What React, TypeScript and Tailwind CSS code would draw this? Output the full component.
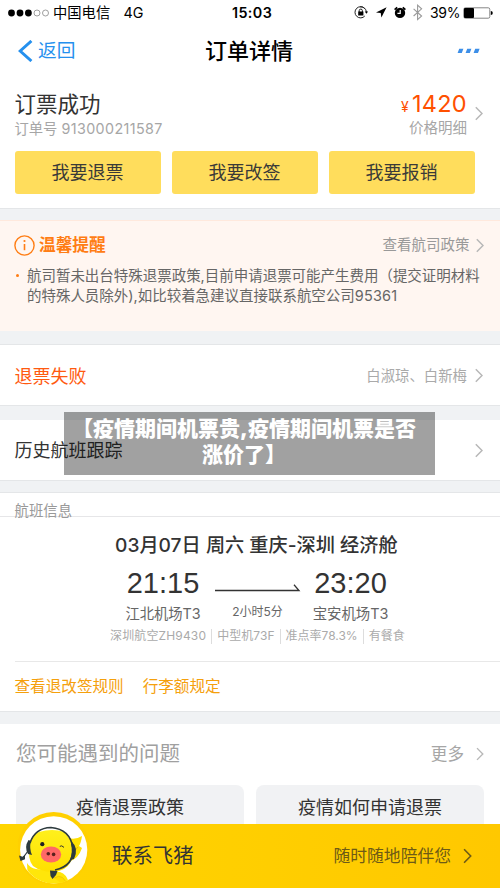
import React from "react";

const FONT = "font-['Inter','Noto_Sans_CJK_SC',sans-serif]";

function Chevron({ className = "text-[#b8b8b8]", w = 8, h = 15 }: { className?: string; w?: number; h?: number }) {
  return (
    <svg width={w} height={h} viewBox="0 0 8 15" className={`shrink-0 ${className}`} fill="none" stroke="currentColor" strokeWidth="1.5">
      <path d="M0.8 1.2 L7 7.5 L0.8 13.8" />
    </svg>
  );
}

function StatusBar() {
  return (
    <div className="flex h-[25px] items-center pl-[8px] pr-[7px] text-[14.3px] leading-[25px] text-black">
      <svg width="42" height="8" viewBox="0 0 42 8" className="shrink-0">
        <circle cx="3.5" cy="4" r="3.4" />
        <circle cx="12" cy="4" r="3.4" />
        <circle cx="20.4" cy="4" r="3.4" />
        <circle cx="29" cy="4" r="3" fill="none" stroke="#777" strokeWidth=".7" />
        <circle cx="37.5" cy="4" r="3" fill="none" stroke="#777" strokeWidth=".7" />
      </svg>
      <span className="ml-[3px] w-[70.5px] shrink-0">中国电信</span>
      <span className="w-[108.5px] shrink-0 text-[14.3px]">4G</span>
      <span className="w-[122px] shrink-0 text-[14.3px] font-semibold tracking-[0.4px]">15:03</span>
      <svg width="72" height="18" viewBox="354 4 72 18" className="shrink-0">
        <g fill="none" stroke="#222" strokeWidth="1">
          <path d="M364.8 8.6 A5.6 5.6 0 1 0 364.8 16" />
          <path d="M360 6.8 A5.6 5.6 0 0 1 366.4 12" />
          <path d="M359.2 12 v-1.3 a1.6 1.6 0 0 1 3.2 0 V12" />
        </g>
        <path d="M358.2 11.6 h5.2 v4 h-5.2z M364.8 11.6 h3.3 l-1.7 2.2z" />
        <path d="M386.6 7.2 L376 12.4 l4.7 .5 l.7 4.6z" />
        <circle cx="400" cy="12.9" r="5.2" />
        <path d="M394.6 9.6 l2.6-2.2 M405.4 9.6 l-2.6-2.2" stroke="#000" strokeWidth="1.7" />
        <path d="M400.2 10 v3.3 h-2.8" fill="none" stroke="#fff" strokeWidth="1.2" />
        <path d="M413.6 8.8 l8 7.2 -4 3.6 V5.2 l4 3.6 -8 7.2" fill="none" stroke="#999" strokeWidth="1.1" />
      </svg>
      <span className="ml-[4px] w-[33px] shrink-0 text-[14px] tracking-[-0.3px]">39%</span>
      <svg width="30" height="12" viewBox="0 0 30 12" className="shrink-0">
        <rect x=".8" y=".8" width="26" height="10.4" rx="1.6" fill="#fff" stroke="#777" strokeWidth=".9" />
        <rect x="1" y="1" width="10" height="10" rx="1" />
        <path d="M27.8 4 a2 2 0 0 1 0 4z" />
      </svg>
    </div>
  );
}

function NavBar() {
  return (
    <div className="flex h-[52px] items-center pl-[18px] pr-[19px]">
      <div className="flex w-[187px] items-center text-[#2590ee]">
        <svg width="15" height="22" viewBox="0 0 15 22" fill="none" stroke="currentColor" strokeWidth="3">
          <path d="M13.4 1 L2.2 11 L13.4 21" />
        </svg>
        <span className="ml-[5px] text-[18.7px] leading-[28px]">返回</span>
      </div>
      <h1 className="text-[22px] font-medium leading-[30px] text-black">订单详情</h1>
      <svg width="24" height="6" viewBox="0 0 24 6" className="ml-auto" fill="#3d8fe8">
        <path d="M2.2 .8h4.2l-1.6 4.2H.6z M10.2 .8h4.2l-1.6 4.2H8.6z M18.2 .8h4.4l-1.6 4.2h-4.4z" />
      </svg>
    </div>
  );
}

function Gap({ className }: { className: string }) {
  return <div className={`shrink-0 bg-[#f0f2f4] border-[#e4e6e8] ${className}`} />;
}

function OrderSummary() {
  return (
    <section className="h-[131px] pl-[14.5px] pr-[15px] pt-[16px]">
      <div className="flex h-[58px]">
        <div>
          <div className="text-[21.5px] leading-[23px] text-[#333]">订票成功</div>
          <div className="mt-[2px] text-[14.3px] leading-[22px] text-[#a6a6a6]">
            订单号 <span className="tracking-[0.4px]">913000211587</span>
          </div>
        </div>
        <div className="ml-auto mr-[8px] flex flex-col items-end">
          <div className="text-[23.5px] leading-[22px] tracking-[0.3px] text-[#ff5000]">
            <span className="mr-[3px] text-[14px]">¥</span>1420
          </div>
          <div className="text-[14.5px] leading-[20px] text-[#a6a6a6]">价格明细</div>
        </div>
        <div className="mr-[2px] pt-[13px]"><Chevron /></div>
      </div>
      <div className="flex gap-[11px]">
        {["我要退票", "我要改签", "我要报销"].map((t) => (
          <button key={t} className="h-[43px] w-[146px] rounded-[3px] bg-[#ffdd5c] text-[18px] leading-[43px] text-[#3a3a38]">{t}</button>
        ))}
      </div>
    </section>
  );
}

function Notice() {
  return (
    <section className="h-[111px] border-t border-[#ffe9dd] bg-[#fff6f1] pl-[14px] pr-[16.5px] pt-[12px]">
      <div className="flex h-[24px] items-center">
        <svg width="21" height="21" viewBox="0 0 21 21" fill="none" stroke="#ff7d14" strokeWidth="1.4">
          <circle cx="10.5" cy="10.5" r="9.6" />
          <path d="M10.5 9v6.2" strokeWidth="1.6" />
          <circle cx="10.5" cy="6" r="1.1" fill="#ff7d14" stroke="none" />
        </svg>
        <span className="ml-[4px] text-[16.7px] font-bold leading-[24px] text-[#ff7d14]">温馨提醒</span>
        <span className="ml-auto mr-[6px] text-[14.5px] text-[#999]">查看航司政策</span>
        <Chevron />
      </div>
      <div className="mt-[9px] flex">
        <span className="ml-[2px] mt-[8px] h-[3px] w-[3px] rounded-full bg-[#ff7d14]" />
        <p className="ml-[8px] whitespace-nowrap text-[14.48px] leading-[19.5px] text-[#666]">
          航司暂未出台特殊退票政策,目前申请退票可能产生费用（提交证明材料<br />
          的特殊人员除外),如比较着急建议直接联系航空公司<span className="tracking-[0.2px]">95361</span>
        </p>
      </div>
    </section>
  );
}

function FlightInfo() {
  return (
    <section className="h-[218px] bg-white">
      <div className="h-[24px] border-b border-[#e6e6e8] pl-[14.5px] pt-[6px] text-[14.4px] leading-[23px] text-[#999]">航班信息</div>
      <div className="pt-[16px]">
        <div className="pl-[115px] text-[19.2px] font-medium leading-[24px] whitespace-nowrap text-[#333]">03月07日 周六 重庆-深圳 经济舱</div>
        <div className="mt-[10px] flex pl-[124px]">
          <div className="w-[78px] text-center">
            <div className="font-['Liberation_Sans'] text-[29px] leading-[32px] text-[#333]">21:15</div>
            <div className="mt-[3px] text-[14.3px] leading-[24px] text-[#666]">江北机场T3</div>
          </div>
          <div className="ml-[12px] w-[87px] text-center">
            <svg width="87" height="32" viewBox="0 0 87 32" fill="none" stroke="#333" strokeWidth="1.3">
              <path d="M1 23.5 H85 L80 17.8" />
            </svg>
            <div className="mt-[2px] text-[12px] leading-[22px] text-[#666]">2小时5分</div>
          </div>
          <div className="ml-[10px] w-[79px] text-center">
            <div className="font-['Liberation_Sans'] text-[29px] leading-[32px] text-[#333]">23:20</div>
            <div className="mt-[3px] text-[14.4px] leading-[24px] text-[#666]">宝安机场T3</div>
          </div>
        </div>
        <div className="ml-[110px] flex h-[20px] items-center whitespace-nowrap text-[12px] leading-[20px] text-[#aaa]">
          <span className="tracking-[0.15px]">深圳航空ZH9430</span><i className="mx-[5px] h-[15px] w-px bg-[#ddd]" />
          <span className="tracking-[0.05px]">中型机73F</span><i className="mx-[5px] h-[15px] w-px bg-[#ddd]" />
          <span>准点率78.3%</span><i className="mx-[5px] h-[15px] w-px bg-[#ddd]" />
          <span>有餐食</span>
        </div>
      </div>
      <div className="ml-[14.5px] mt-[15px] flex gap-[19px] border-t border-[#e8e8e8] pt-[13px] text-[15.6px] leading-[24px] text-[#f5a00c]">
        <span>查看退改签规则</span>
        <span>行李额规定</span>
      </div>
    </section>
  );
}

function Questions() {
  return (
    <section className="h-[100px] overflow-hidden px-[16px] pt-[15px]">
      <div className="flex h-[30px] items-center">
        <span className="text-[20.5px] leading-[30px] text-[#a0a0a0]">您可能遇到的问题</span>
        <span className="ml-auto mr-[12px] text-[16.6px] text-[#a6a6a6]">更多</span>
        <Chevron w={8} h={14} />
      </div>
      <div className="mt-[16px] flex gap-[12px]">
        {["疫情退票政策", "疫情如何申请退票"].map((t) => (
          <div key={t} className="h-[54px] w-[228px] rounded-[8px] bg-[#f1f2f4] text-center text-[18px] leading-[46px] text-[#333]">{t}</div>
        ))}
      </div>
    </section>
  );
}

function Mascot() {
  return (
    <svg width="74" height="76" viewBox="0 0 74 76" className="absolute bottom-0 left-[18px]">
      <defs>
        <linearGradient id="pig" x1="0" y1="0" x2="0" y2="1">
          <stop offset="0" stopColor="#fff01c" />
          <stop offset="1" stopColor="#ffe000" />
        </linearGradient>
        <clipPath id="disc"><circle cx="36" cy="38" r="33.5" /></clipPath>
      </defs>
      <circle cx="35.7" cy="36.5" r="36.5" fill="#ffd000" />
      <circle cx="35.7" cy="37.8" r="33.6" fill="#fff" />
      <g clipPath="url(#disc)">
        <path d="M50 26 Q58 28 64 24 Q63 31 61 34 L64 36 Q60 48 51 49z" fill="#ffe000" />
        <path d="M60 35 Q56 41 52 41" stroke="#edb300" fill="none" />
        <path d="M9 51 Q12 56 18 57 L42 60 Q50 62 52 76 H15 Q9 65 9 51" fill="#ffe60a" />
        <path d="M36 66 Q46 60 50 76" fill="#ffdc00" stroke="#efc300" strokeWidth=".8" />
      </g>
      <g transform="translate(0 2)">
        <path d="M12 30 Q13 21 21 18 Q34 14 47 18 Q54 27 55 42 Q52 54 41 57 Q26 60 15 52 Q9 45 12 30z" fill="url(#pig)" />
        <path d="M12 29 Q17 14 33 13.5 Q52 15 55 34 Q56 52 37 56" fill="none" stroke="#2d3a3d" strokeWidth="1.7" />
        <path d="M10.5 26 Q6 33 10 40 L14 41 Q11 34 13 27z M54 28 Q61 34 56 45 L52 46 Q55 38 53 30z" fill="#2d3a3d" />
      </g>
      <path d="M10 39 Q7 43 5 46" fill="none" stroke="#2d3a3d" strokeWidth="1.2" />
      <path d="M1 43.5 l3.5 1.2 2.5-2 0 4.5 -4.5 1.8z M32 58.5 l7.5 .5 -1.5 4 -3.5 4 -2-3z" fill="#2d3a3d" />
      <ellipse cx="33" cy="42.5" rx="10.2" ry="8" fill="#ff6866" />
      <circle cx="30.3" cy="41.8" r="1.8" fill="#5a201e" />
      <circle cx="35.6" cy="42.4" r="1.8" fill="#5a201e" />
      <circle cx="24.3" cy="32.2" r="2.1" fill="#222" />
      <path d="M41.8 34.4 Q43.5 32.8 46 35.4" fill="none" stroke="#333" strokeWidth="1" />
    </svg>
  );
}

function ContactBar() {
  return (
    <footer className="relative flex h-[64px] items-center bg-gradient-to-r from-[#ffd500] to-[#ffc800] pl-[112px] pr-[28px]">
      <Mascot />
      <span className="text-[20.4px] leading-[30px] text-[#333]">联系飞猪</span>
      <span className="ml-auto mr-[12px] text-[16.8px] leading-[26px] text-[#6d5a16]">随时随地陪伴您</span>
      <Chevron className="text-[#6d5a16]" w={9} h={16} />
    </footer>
  );
}

export default function App() {
  return (
    <main className={`relative flex h-[888px] w-[500px] flex-col overflow-hidden bg-white [&>*]:shrink-0 ${FONT}`}>
      <StatusBar />
      <NavBar />
      <OrderSummary />
      <Gap className="h-[12px] border-t" />
      <Notice />
      <Gap className="h-[14px] border-b" />
      <section className="flex h-[60px] items-center pl-[14.5px] pr-[17px]">
        <span className="mt-[2px] text-[18px] text-[#ff5a10]">退票失败</span>
        <span className="ml-auto mr-[8px] mt-[1px] text-[14.4px] text-[#aaa]">白淑琼、白新梅</span>
        <Chevron />
      </section>
      <Gap className="h-[15px] border-t" />
      <section className="flex h-[60px] items-center pl-[14.5px] pr-[17px]">
        <span className="mt-[1px] text-[18px] text-[#333]">历史航班跟踪</span>
        <Chevron className="ml-auto text-[#b8b8b8]" />
      </section>
      <Gap className="h-[13px] border-y" />
      <FlightInfo />
      <Gap className="h-[13px] border-t" />
      <Questions />
      <ContactBar />
      <div className="absolute left-[64px] top-[412px] h-[63px] w-[371px] bg-black/37 pr-[11px] pt-[4px] text-center text-[21px] font-black leading-[26px] whitespace-nowrap text-white">
        【疫情期间机票贵,疫情期间机票是否<br />涨价了】
      </div>
    </main>
  );
}
